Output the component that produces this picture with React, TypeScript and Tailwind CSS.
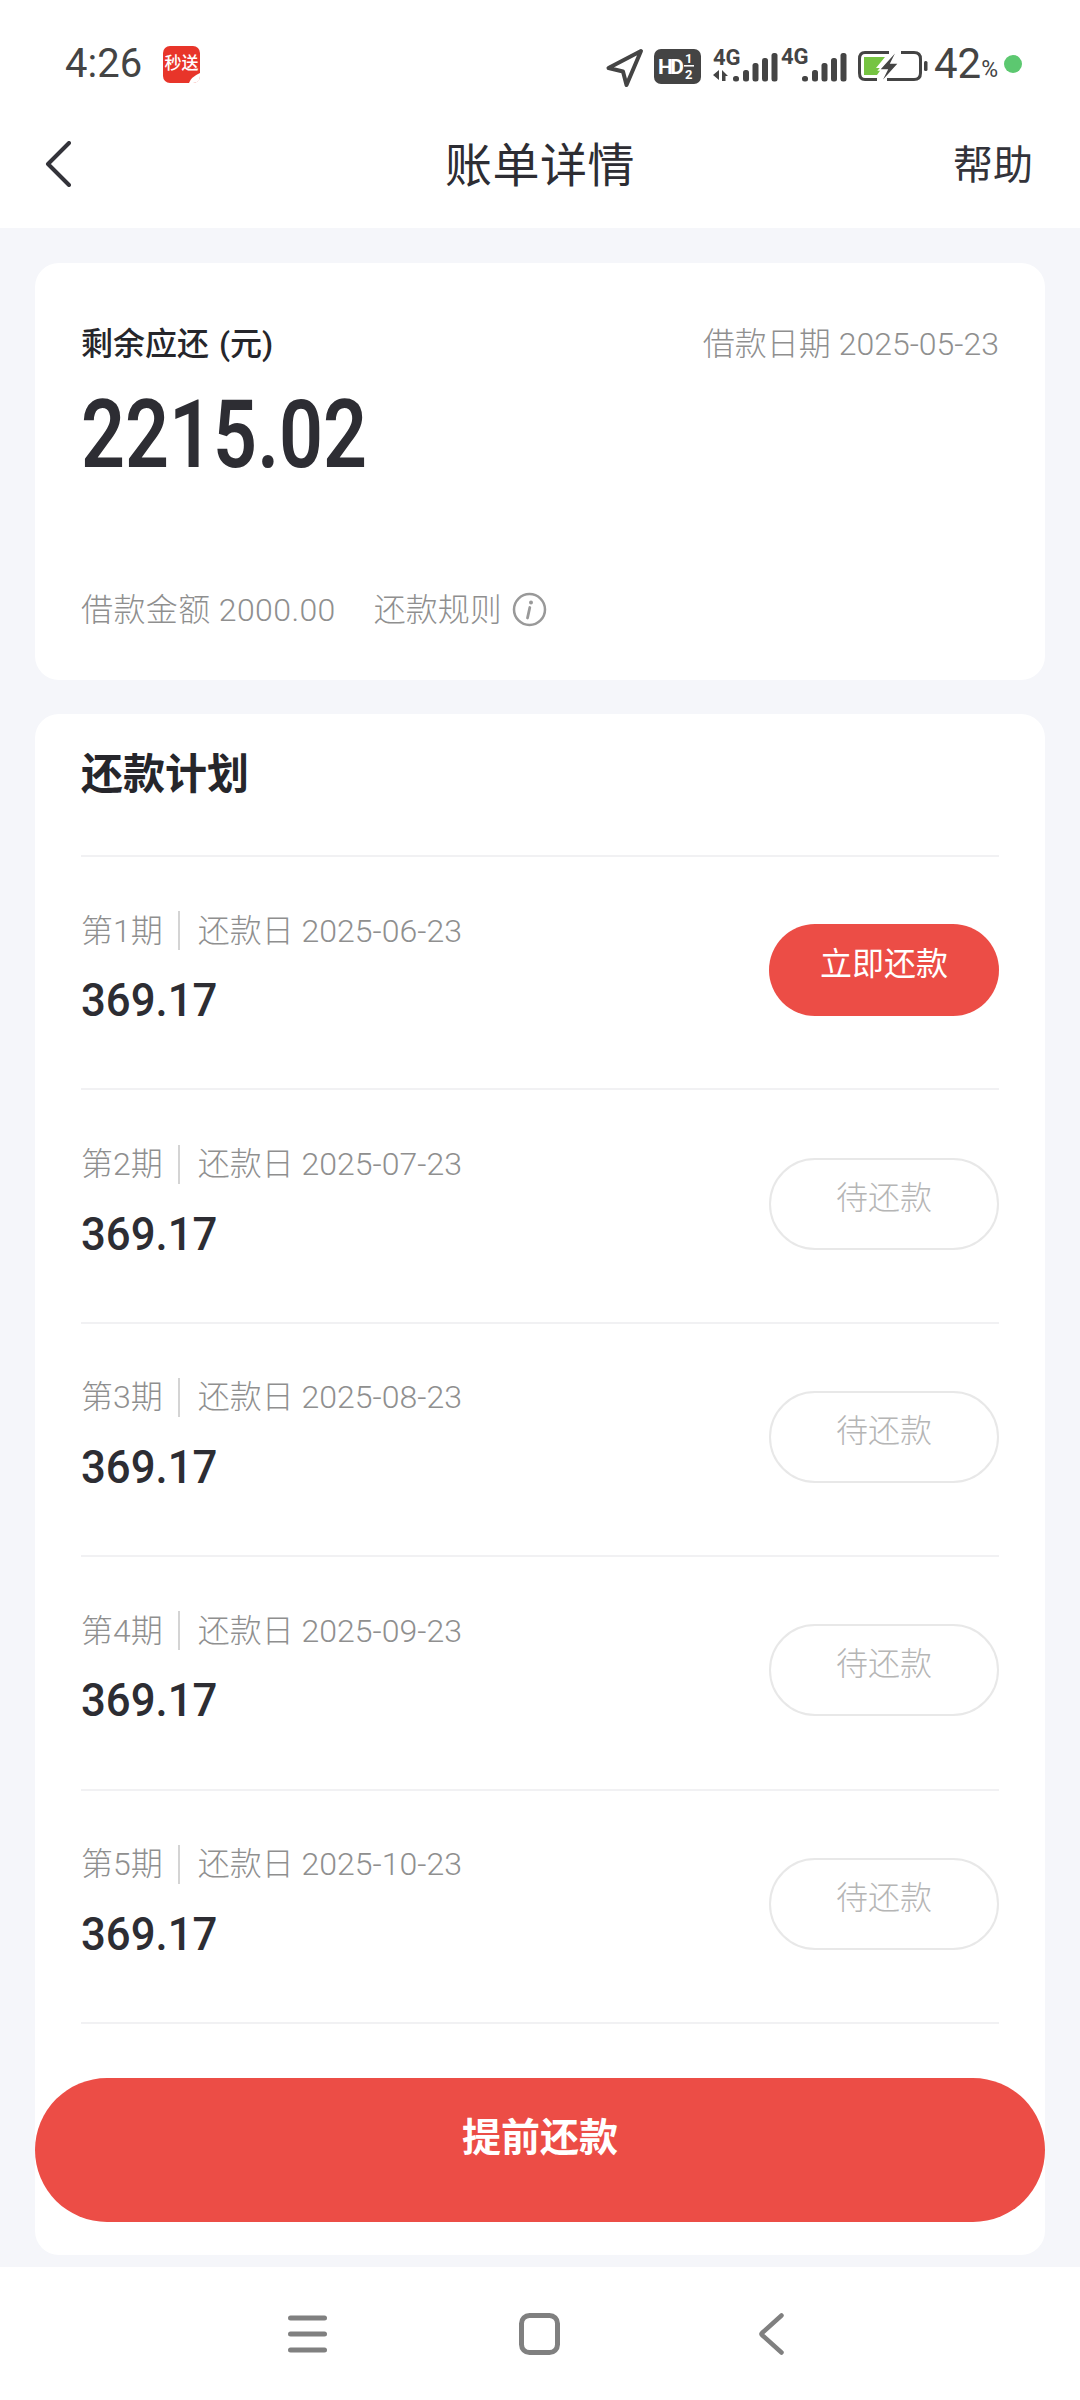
import React from "react";

const FONT = "font-['Roboto','Noto_Sans_CJK_SC',sans-serif]";

const plans = [
  { n: 1, date: "2025-06-23" },
  { n: 2, date: "2025-07-23" },
  { n: 3, date: "2025-08-23" },
  { n: 4, date: "2025-09-23" },
  { n: 5, date: "2025-10-23" },
  { n: 6, date: "2025-11-23" },
];

function Bars({ x }: { x: number }) {
  const xs = [0, 10, 19.5, 29, 38.5];
  const tops = [73, 67, 60, 55, 50];
  return (
    <g fill="#444">
      {xs.map((d, i) => (
        <rect key={i} x={x + d} y={tops[i]} width={6} height={78.5 - tops[i]} rx={2.5} />
      ))}
    </g>
  );
}

function StatusIcons() {
  return (
    <svg width="332" height="50" viewBox="600 36 332 50" className="block">
      <path d="M640 48 L607.5 65 L622 68.5 L625.5 82 Z" fill="none" stroke="#444" strokeWidth="4" strokeLinejoin="round" />
      <rect x="653" y="46" width="47" height="35" rx="7" fill="#444" />
      <text x="657" y="71" fontFamily="Roboto" fontWeight="700" fontSize="21" fill="#fff" textLength="26">HD</text>
      <text x="684" y="60" fontFamily="Roboto" fontWeight="700" fontSize="13" fill="#fff">1</text>
      <rect x="683" y="62" width="10" height="1.6" fill="#fff" />
      <text x="684" y="76" fontFamily="Roboto" fontWeight="700" fontSize="13" fill="#fff">2</text>
      <text x="712" y="62" fontFamily="Roboto" fontWeight="700" fontSize="22" fill="#444">4G</text>
      <path d="M718 67 V77 L712 72 Z M721 67 V78 H724.5 V73 H727 Z" fill="#444" />
      <g transform="translate(732 0)"><Bars x={0} /></g>
      <text x="780" y="61" fontFamily="Roboto" fontWeight="700" fontSize="22" fill="#444">4G</text>
      <g transform="translate(801 0)"><Bars x={0} /></g>
      <g transform="translate(-2 0)">
        <path d="M890 49.5 H866 Q860.5 49.5 860.5 56 V70 Q860.5 76.5 866 76.5 H878 M888 76.5 H915 Q921.5 76.5 921.5 70 V56 Q921.5 49.5 915 49.5 H902" fill="none" stroke="#444" strokeWidth="3" />
        <path d="M865 54 H886 L877 65 H883 L878 72 H865 Z" fill="#76c442" />
        <path d="M899 46 L880 67 H888 L881 81 L900 60 H892 Z" fill="#444" stroke="#fff" strokeWidth="1.5" />
        <rect x="925" y="58" width="3.5" height="10" rx="1.5" fill="#444" />
      </g>
    </svg>
  );
}

function StatusBar() {
  return (
    <div className="h-[100px] pt-[28px] pl-[65px] pr-[58px] flex items-center">
      <span className="text-[40px] leading-none text-[#444]">4:26</span>
      <svg width="37" height="37" viewBox="0 0 37 37" className="ml-[21px] block">
        <rect width="37" height="37" rx="7" fill="#e8352a" />
        <text x="18.5" y="23" textAnchor="middle" fontSize="17" fontWeight="500" fill="#fff" fontFamily="Noto Sans CJK SC">秒送</text>
        <path d="M26 37 Q28 31 37 27 V30 Q37 37 30 37 Z" fill="#fff" />
      </svg>
      <div className="ml-auto flex items-center">
        <StatusIcons />
        <span className="ml-[1px] text-[42px] leading-none text-[#444]">42</span>
        <span className="mt-[10px] text-[23px] leading-none text-[#444]">%</span>
        <span className="ml-[6px] w-[18px] h-[18px] rounded-full bg-[#5cc870]" />
      </div>
    </div>
  );
}

function Header() {
  return (
    <div className="h-[128px] pl-[45px] pr-[47px] flex items-center justify-between relative">
      <svg width="26" height="46" viewBox="0 0 26 46" className="block">
        <path d="M24 2 L3 23 L24 44" fill="none" stroke="#33333a" strokeWidth="4" strokeLinecap="round" strokeLinejoin="round" />
      </svg>
      <span className="absolute left-0 right-0 pt-[2px] text-center text-[47px] leading-none tracking-[0.5px] text-[#2d2d33]">账单详情</span>
      <span className="pt-[4px] text-[40px] leading-none text-[#33333a]">帮助</span>
    </div>
  );
}

function SummaryCard() {
  return (
    <section className="h-[417px] rounded-[24px] bg-white px-[46px] pt-[62px] shrink-0">
      <div className="flex justify-between items-center h-[38px]">
        <span className="flex text-[32px] leading-none font-medium text-[#26262b]">
          <span>剩余应还</span>
          <span className="ml-[10px]">(元)</span>
        </span>
        <span className="text-[32px] leading-none font-light text-[#8f8f8f]">借款日期 2025-05-23</span>
      </div>
      <div className="mt-[26px] h-[92px] flex items-center">
        <span className="inline-block origin-left scale-x-[0.82] text-[94px] leading-none font-semibold text-[#2d2d33]">2215.02</span>
      </div>
      <div className="mt-[111px] flex items-center text-[32px] leading-none font-light text-[#8f8f8f]">
        <span className="tracking-[0.4px]">借款金额 2000.00</span>
        <span className="ml-[38px]">还款规则</span>
        <svg width="35" height="35" viewBox="0 0 35 35" className="ml-[10px] block">
          <circle cx="17.5" cy="17.5" r="15.5" fill="none" stroke="#999" strokeWidth="2.5" />
          <circle cx="19" cy="10.5" r="2" fill="#999" />
          <path d="M17.8 15.5 L15.5 26" fill="none" stroke="#999" strokeWidth="2.8" strokeLinecap="round" />
        </svg>
      </div>
    </section>
  );
}

function PlanRow({ n, date }: { n: number; date: string }) {
  const first = n === 1;
  return (
    <div className="h-[233.4px] pb-[5px] border-t-2 border-[#f1f1f3] flex items-center justify-between">
      <div className="flex flex-col pb-[6px]">
        <div className="flex items-center text-[32px] leading-none font-light text-[#8f8f8f]">
          <span>第{n}期</span>
          <span className="ml-[15px] mr-[18px] w-[2px] h-[39px] bg-[#d4d4d4]" />
          <span>还款日 {date}</span>
        </div>
        <span className="mt-[27px] inline-block origin-left scale-x-[0.95] text-[46px] leading-none font-medium text-[#2d2d33]">369.17</span>
      </div>
      {first ? (
        <div className="w-[230px] h-[92px] pb-[12px] rounded-full bg-[#ec4d46] flex items-center justify-center text-[32px] leading-none text-white">立即还款</div>
      ) : (
        <div className="w-[230px] h-[92px] pb-[12px] rounded-full border-2 border-[#e8e8e8] flex items-center justify-center text-[32px] leading-none font-light text-[#b5b5b5]">待还款</div>
      )}
    </div>
  );
}

function PlanCard() {
  return (
    <section className="flex-1 min-h-0 overflow-hidden rounded-[24px] bg-white px-[46px]">
      <h2 className="h-[141px] pb-[19px] flex items-center text-[42px] leading-none font-bold text-[#26262b]">还款计划</h2>
      {plans.map((p) => (
        <PlanRow key={p.n} n={p.n} date={p.date} />
      ))}
    </section>
  );
}

function NavBar() {
  return (
    <nav className="h-[133px] shrink-0 bg-white pl-[288px] flex items-center">
      <svg width="39" height="38" viewBox="0 0 39 38" className="block">
        <g fill="none" stroke="#808080" strokeWidth="5" strokeLinecap="round">
          <path d="M2.5 3 H36.5" />
          <path d="M2.5 19 H36.5" />
          <path d="M2.5 35 H36.5" />
        </g>
      </svg>
      <svg width="41" height="42" viewBox="0 0 41 42" className="block ml-[192px]">
        <rect x="2.5" y="2.5" width="36" height="37" rx="8" fill="none" stroke="#808080" strokeWidth="5" />
      </svg>
      <svg width="26" height="42" viewBox="0 0 26 42" className="block ml-[198px]">
        <path d="M23.5 2.5 L4 20 Q3 21 4 22 L23.5 39.5" fill="none" stroke="#808080" strokeWidth="4.5" strokeLinecap="round" />
      </svg>
    </nav>
  );
}

export default function App() {
  return (
    <div className={`relative w-[1080px] h-[2400px] overflow-hidden bg-[#f5f6fa] flex flex-col ${FONT}`}>
      <div className="bg-white shrink-0">
        <StatusBar />
        <Header />
      </div>
      <main className="flex-1 min-h-0 flex flex-col gap-[34px] px-[35px] pt-[35px] pb-[12px]">
        <SummaryCard />
        <PlanCard />
      </main>
      <NavBar />
      <button className="absolute left-[35px] right-[35px] bottom-[178px] h-[144px] pb-[24px] rounded-full bg-[#ec4d46] text-white text-[39px] leading-none font-bold flex items-center justify-center">
        提前还款
      </button>
    </div>
  );
}
